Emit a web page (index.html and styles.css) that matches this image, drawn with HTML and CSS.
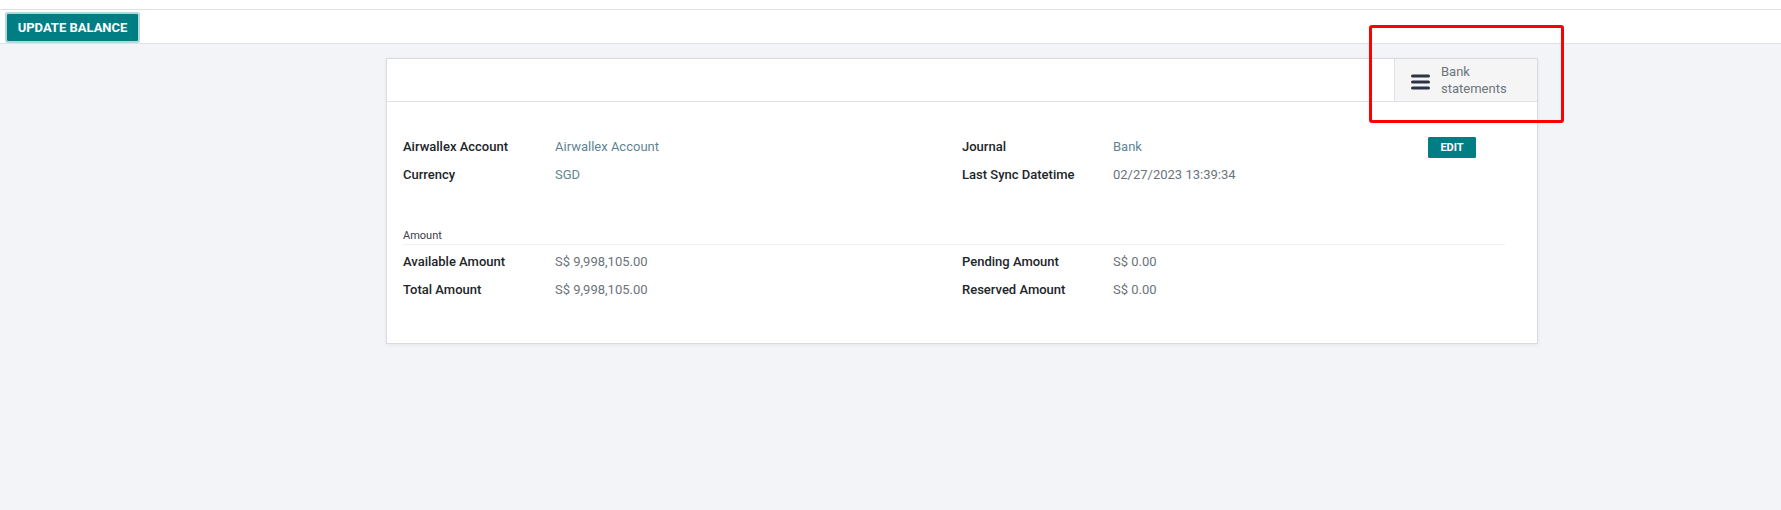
FILE: index.html
```html
<!DOCTYPE html>
<html lang="en">
<head>
<meta charset="utf-8">
<title>Airwallex Account</title>
<link rel="stylesheet" href="styles.css">
</head>
<body>
<div class="topbar"></div>
<div class="control-panel">
  <button class="btn btn-primary btn-update">UPDATE BALANCE</button>
</div>
<main class="main">
  <div class="card">
    <div class="card-header">
      <div class="button-box">
        <svg class="menu-icon" width="19" height="16" viewBox="0 0 19 16" aria-hidden="true">
          <rect x="0" y="0.5" width="19" height="3" rx="1.5" fill="#2b3445"/>
          <rect x="0" y="6.5" width="19" height="3" rx="1.5" fill="#2b3445"/>
          <rect x="0" y="12.5" width="19" height="3" rx="1.5" fill="#2b3445"/>
        </svg>
        <span class="box-text">Bank<br>statements</span>
      </div>
    </div>
    <div class="sheet">
      <div class="fields top">
        <div class="label">Airwallex Account</div>
        <div class="value link">Airwallex Account</div>
        <div class="label">Journal</div>
        <div class="value link">Bank</div>
        <button class="btn btn-primary btn-edit">EDIT</button>
        <div class="label">Currency</div>
        <div class="value link">SGD</div>
        <div class="label">Last Sync Datetime</div>
        <div class="value">02/27/2023 13:39:34</div>
      </div>
      <div class="separator">Amount</div>
      <div class="fields amounts">
        <div class="label">Available Amount</div>
        <div class="value">S$ 9,998,105.00</div>
        <div class="label">Pending Amount</div>
        <div class="value">S$ 0.00</div>
        <div class="label">Total Amount</div>
        <div class="value">S$ 9,998,105.00</div>
        <div class="label">Reserved Amount</div>
        <div class="value">S$ 0.00</div>
      </div>
    </div>
  </div>
</main>
<div class="highlight"></div>
</body>
</html>
```
FILE: styles.css
```css
html, body {
  margin: 0;
  padding: 0;
}
body {
  background: #f3f4f7;
  font-family: Roboto, "Liberation Sans", sans-serif;
  font-size: 13px;
  color: #212529;
  min-height: 510px;
}
.topbar {
  height: 9px;
  background: #ffffff;
  border-bottom: 1px solid #dee2e6;
}
.control-panel {
  height: 33px;
  background: #ffffff;
  border-bottom: 1px solid #dee2e6;
  display: flex;
  align-items: flex-start;
  padding-left: 7px;
}
.btn {
  font-family: Roboto, "Liberation Sans", sans-serif;
  font-weight: 700;
  color: #ffffff;
  background: #017e84;
  border: 1px solid #017e84;
  border-radius: 1px;
  padding: 0;
  cursor: pointer;
}
.btn-update {
  margin-top: 4px;
  height: 27px;
  width: 131px;
  font-size: 13px;
  box-shadow: 0 0 0 2px rgba(1, 126, 132, 0.3);
}
.main {
  padding: 14px 0 0 386px;
}
.card {
  width: 1150px;
  background: #ffffff;
  border: 1px solid #d9dbe0;
  box-shadow: 0 1px 4px rgba(0, 0, 0, 0.06);
}
.card-header {
  height: 42px;
  border-bottom: 1px solid #dee2e6;
  display: flex;
  justify-content: flex-end;
}
.button-box {
  border-left: 1px solid #dee2e6;
  background: #f5f5f5;
  display: flex;
  align-items: center;
  padding-left: 16px;
  box-sizing: border-box;
  width: 143px;
  gap: 11px;
}
.menu-icon {
  flex: none;
  margin-top: 3px;
}
.box-text {
  font-size: 13px;
  line-height: 17px;
  color: #6c757d;
}
.sheet {
  padding: 31px 32px 39px 16px;
}
.fields {
  display: grid;
  grid-template-columns: 152px 407px 151px 1fr;
}
.fields.top {
  grid-template-columns: 152px 407px 151px 1fr 48px;
  grid-auto-rows: 28px;
  line-height: 28px;
  padding-right: 29px;
}
.fields.amounts {
  grid-auto-rows: 28px;
  line-height: 28px;
  margin-top: 3px;
}
.label {
  font-weight: 500;
  color: #212529;
  white-space: nowrap;
}
.value {
  color: #6c737c;
  white-space: nowrap;
}
.value.link {
  color: #5f8591;
}
.btn-edit {
  grid-column: 5;
  grid-row: 1 / span 2;
  align-self: start;
  margin-top: 4px;
  width: 48px;
  height: 21px;
  font-size: 11px;
  line-height: 19px;
}
.separator {
  margin-top: 39px;
  font-size: 11px;
  line-height: 15px;
  padding-bottom: 1px;
  color: #3b4048;
  border-bottom: 1px solid #f0f0f0;
}
.highlight {
  position: absolute;
  left: 1369px;
  top: 25px;
  width: 189px;
  height: 92px;
  border: 3px solid #ff0000;
  border-radius: 3px;
}
```
